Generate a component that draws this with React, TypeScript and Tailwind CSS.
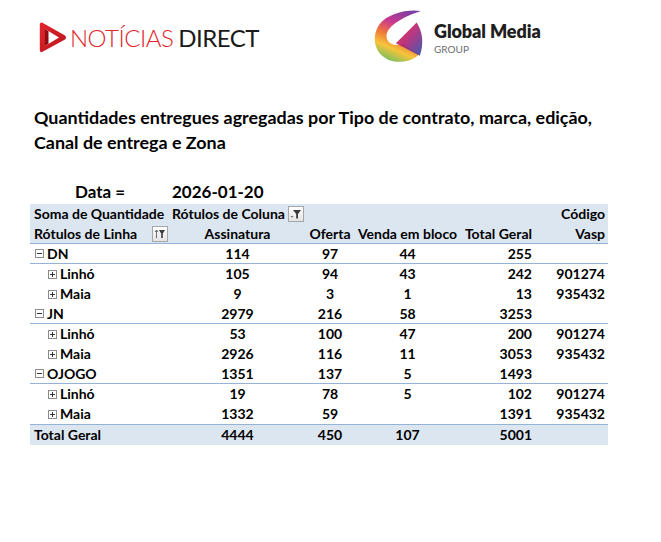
import React from "react";

const FilterBtn = ({ sort }: { sort?: boolean }) => (
  <span className="inline-flex items-center justify-center w-[16px] h-[16px] border border-[#a6a6a6] bg-gradient-to-b from-[#ffffff] to-[#e4e4e4]">
    <svg width="12" height="12" viewBox="0 0 12 12">
      {sort ? (
        <>
          <path d="M2.5 2 L2.5 10" stroke="#6b6b6b" strokeWidth="1" />
          <path d="M1 4 L2.5 2 L4 4" stroke="#6b6b6b" strokeWidth="1" fill="none" />
          <path d="M5 2 L11 2 L8.8 5.5 L8.8 10 L7.2 10 L7.2 5.5 Z" fill="#3a3a3a" />
        </>
      ) : (
        <>
          <path d="M3 2 L11 2 L8 6 L8 10.5 L6.2 10.5 L6.2 6 Z" fill="#3a3a3a" />
          <path d="M0.5 8 L3.5 8 L2 9.8 Z" fill="#6b6b6b" />
        </>
      )}
    </svg>
  </span>
);

const Toggle = ({ plus }: { plus?: boolean }) => (
  <span className="inline-flex items-center justify-center w-[9px] h-[9px] border border-[#8c8c8c] bg-white mr-[3px]">
    <svg width="7" height="7" viewBox="0 0 7 7">
      <path d="M1 3.5 L6 3.5" stroke="#333" strokeWidth="1" />
      {plus && <path d="M3.5 1 L3.5 6" stroke="#333" strokeWidth="1" />}
    </svg>
  </span>
);

type Row = {
  label: string;
  level: 0 | 1;
  a: string;
  o: string;
  v: string;
  t: string;
  c: string;
  line?: boolean;
};

const rows: Row[] = [
  { label: "DN", level: 0, a: "114", o: "97", v: "44", t: "255", c: "", line: true },
  { label: "Linhó", level: 1, a: "105", o: "94", v: "43", t: "242", c: "901274" },
  { label: "Maia", level: 1, a: "9", o: "3", v: "1", t: "13", c: "935432" },
  { label: "JN", level: 0, a: "2979", o: "216", v: "58", t: "3253", c: "", line: true },
  { label: "Linhó", level: 1, a: "53", o: "100", v: "47", t: "200", c: "901274" },
  { label: "Maia", level: 1, a: "2926", o: "116", v: "11", t: "3053", c: "935432" },
  { label: "OJOGO", level: 0, a: "1351", o: "137", v: "5", t: "1493", c: "", line: true },
  { label: "Linhó", level: 1, a: "19", o: "78", v: "5", t: "102", c: "901274" },
  { label: "Maia", level: 1, a: "1332", o: "59", v: "", t: "1391", c: "935432" },
];

export default function App() {
  return (
    <div className="w-[661px] h-[542px] bg-white text-black font-['Lato','Liberation_Sans',sans-serif] relative overflow-hidden">
      {/* Logos */}
      <div className="flex items-start h-[70px]">
        <div className="flex items-center ml-[39px] mt-[21px]">
          <svg width="28" height="33" viewBox="0 0 28 33">
            <defs>
              <linearGradient id="rg" x1="0" y1="0" x2="1" y2="1">
                <stop offset="0" stopColor="#e4252c" />
                <stop offset="1" stopColor="#b8151c" />
              </linearGradient>
            </defs>
            <path d="M3 1.5 Q0.5 1 0.8 4 L0.8 29 Q0.8 32 3.5 30.8 L26 18.5 Q28 16.5 26 14.5 Z M6 8 L20 16.5 L6 25 Z" fill="url(#rg)" fillRule="evenodd" />
            <path d="M6 8 L9.5 10.2 L9.5 22.8 L6 25 Z" fill="#8f0d12" />
          </svg>
          <div className="ml-[3px] text-[24px] leading-none tracking-[-0.5px] flex items-baseline">
            <span className="text-[#e2252b] font-light">NOTÍCIAS</span>
            <span className="ml-[5px] text-[#1a1a1a] font-normal">DIRECT</span>
          </div>
        </div>
        <div className="flex items-start ml-[114px] mt-[9px]">
          <svg width="52" height="54" viewBox="0 0 50 52">
            <defs>
              <linearGradient id="gband" x1="0.7" y1="0" x2="0.3" y2="1">
                <stop offset="0" stopColor="#7d3fa3" />
                <stop offset="0.3" stopColor="#c9378f" />
                <stop offset="0.55" stopColor="#f07a3a" />
                <stop offset="0.75" stopColor="#f6c43c" />
                <stop offset="1" stopColor="#6fbf5f" />
              </linearGradient>
              <linearGradient id="gtri" x1="0" y1="0" x2="1" y2="1">
                <stop offset="0" stopColor="#e8262b" />
                <stop offset="0.5" stopColor="#b0267a" />
                <stop offset="1" stopColor="#2a4fa8" />
              </linearGradient>
            </defs>
            <path d="M46 2 C34 0 14 4 6 15 C-2 27 1 43 15 49 C26 53 38 50 44 44 L29 33 C21 37 13 33 13 26 C13 18 25 9 46 2 Z" fill="url(#gband)" />
            <path d="M22 33 L42 13 C48 22 49 34 45 45 Z" fill="url(#gtri)" opacity="0.92" />
          </svg>
          <div className="ml-[9px] mt-[13px] flex flex-col">
            <span className="text-[18px] leading-none font-extrabold text-[#1e1e1e] tracking-[-0.1px]">Global Media</span>
            <span className="text-[10px] leading-none mt-[4px] text-[#6d6d6d]">GROUP</span>
          </div>
        </div>
      </div>

      {/* Title */}
      <div className="ml-[34px] mt-[35px] text-[17.9px] leading-[25px] font-bold">
        <div className="whitespace-nowrap">Quantidades entregues agregadas por Tipo de contrato, marca, edição,</div>
        <div>Canal de entrega e Zona</div>
      </div>

      {/* Date */}
      <div className="flex items-center mt-[27px] h-[20px] text-[17px] font-bold">
        <span className="ml-[75px] w-[97px]">Data =</span>
        <span>2026-01-20</span>
      </div>

      {/* Table */}
      <div className="ml-[30px] w-[578px] mt-[2px] text-[14px] font-bold leading-[20px]">
        <div className="bg-[#dce6f1]">
          <div className="flex h-[20px] items-center">
            <div className="w-[140px] pl-[4px] whitespace-nowrap">Soma de Quantidade</div>
            <div className="flex-1 pl-[2px] flex items-center gap-[3px] whitespace-nowrap">
              <span>Rótulos de Coluna</span>
              <FilterBtn />
            </div>
            <div className="w-[73px] text-right pr-[3px]">Código</div>
          </div>
          <div className="flex h-[20px] items-center border-b border-[#95b3d7]">
            <div className="w-[140px] pl-[4px] flex items-center justify-between pr-[2px] whitespace-nowrap">
              <span>Rótulos de Linha</span>
              <FilterBtn sort />
            </div>
            <div className="w-[135px] text-center">Assinatura</div>
            <div className="w-[50px] text-center">Oferta</div>
            <div className="w-[105px] text-center whitespace-nowrap">Venda em bloco</div>
            <div className="w-[75px] text-right pr-[3px] whitespace-nowrap">Total Geral</div>
            <div className="w-[73px] text-right pr-[3px]">Vasp</div>
          </div>
        </div>
        {rows.map((r, i) => (
          <div
            key={i}
            className={`flex h-[20px] items-center ${r.line ? "border-b border-[#95b3d7]" : ""}`}
          >
            <div className={`w-[140px] flex items-center whitespace-nowrap ${r.level === 0 ? "pl-[5px]" : "pl-[18px]"}`}>
              <Toggle plus={r.level === 1} />
              <span>{r.label}</span>
            </div>
            <div className="w-[135px] text-center">{r.a}</div>
            <div className="w-[50px] text-center">{r.o}</div>
            <div className="w-[105px] text-center">{r.v}</div>
            <div className="w-[75px] text-right pr-[3px]">{r.t}</div>
            <div className="w-[73px] text-right pr-[3px]">{r.c}</div>
          </div>
        ))}
        <div className="flex h-[20px] items-center bg-[#dce6f1] border-t border-[#95b3d7] box-content">
          <div className="w-[140px] pl-[4px]">Total Geral</div>
          <div className="w-[135px] text-center">4444</div>
          <div className="w-[50px] text-center">450</div>
          <div className="w-[105px] text-center">107</div>
          <div className="w-[75px] text-right pr-[3px]">5001</div>
          <div className="w-[73px]"></div>
        </div>
      </div>
    </div>
  );
}
